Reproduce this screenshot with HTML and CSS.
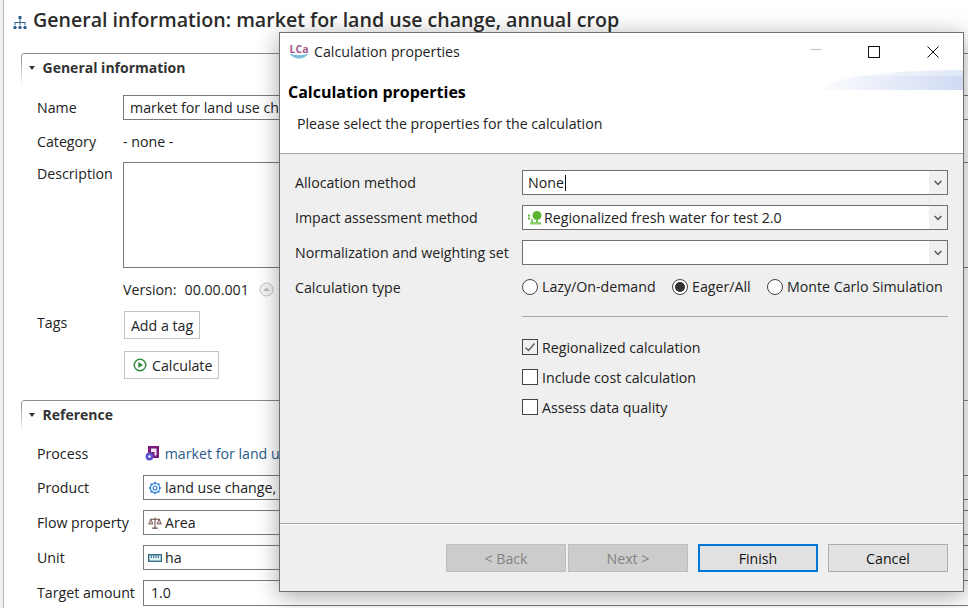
FILE: index.html
```html
<!DOCTYPE html>
<html>
<head>
    <link rel="stylesheet" href="styles.css">
</head>
<body>

<!-- editor behind the dialog -->
<div class="editor">
    <h1 class="editor-title">
        <svg class="title-icon" width="14" height="14" viewBox="0 0 14 14"><g fill="#2f5f8a"><rect x="5.5" y="0" width="3" height="3"/><rect x="6.5" y="3" width="1" height="3"/><rect x="2" y="6" width="10" height="1"/><rect x="1.5" y="6" width="1" height="3"/><rect x="6.5" y="6" width="1" height="3"/><rect x="11.5" y="6" width="1" height="3"/><circle cx="2" cy="11.5" r="1.7"/><circle cx="7" cy="11.5" r="1.7"/><circle cx="12" cy="11.5" r="1.7"/></g></svg>
        General information: market for land use change, annual crop
    </h1>

    <section class="panel panel-general">
        <h2 class="panel-title"><span class="twistie"></span>General information</h2>
        <div class="row row-name">
            <label>Name</label>
            <div class="field field-name">market for land use cha</div>
        </div>
        <div class="row row-category">
            <label>Category</label>
            <div class="plain">- none -</div>
        </div>
        <div class="row row-desc">
            <label>Description</label>
            <div class="field field-desc"></div>
        </div>
        <div class="version">
            <span>Version:</span><span class="version-num">00.00.001</span>
            <svg width="15" height="15" viewBox="0 0 15 15"><circle cx="7.5" cy="7.5" r="6.5" fill="#f4f4f4" stroke="#c4c4c4"/><path d="M4 9 L7.5 5.5 L11 9 Z" fill="#bdbdbd"/></svg>
        </div>
        <div class="row row-tags">
            <label>Tags</label>
            <div class="flat-btn tag-btn">Add a tag</div>
        </div>
        <div class="flat-btn calc-btn">
            <svg width="14" height="14" viewBox="0 0 14 14"><circle cx="7" cy="7" r="5.8" fill="none" stroke="#2e8b3d" stroke-width="1.4"/><path d="M5.3 4 L10 7 L5.3 10 Z" fill="#2e8b3d"/></svg>
            Calculate
        </div>
    </section>

    <section class="panel panel-ref">
        <h2 class="panel-title"><span class="twistie"></span>Reference</h2>
        <div class="ref-row ref-process">
            <label>Process</label>
            <div class="plain link">
                <svg width="14" height="15" viewBox="0 0 14 15"><rect x="3" y="0" width="11" height="12" fill="#7a1a7a"/><path d="M6 2.5 H11.5 V9.5 H9.5 V6 H6 Z" fill="#f4e8f4"/><circle cx="4.5" cy="10.5" r="2.6" fill="#fff" stroke="#5a50c8" stroke-width="2.6"/></svg>
                market for land u
            </div>
        </div>
        <div class="ref-row">
            <label>Product</label>
            <div class="field field-ref">
                <svg width="14" height="14" viewBox="0 0 14 14"><circle cx="7" cy="7" r="2" fill="none" stroke="#2f7fe0" stroke-width="1.1"/><circle cx="7" cy="7" r="4.6" fill="none" stroke="#2f7fe0" stroke-width="1.1"/><path d="M7 0.8 V2.6 M7 11.4 V13.2 M0.8 7 H2.6 M11.4 7 H13.2 M2.6 2.6 L3.8 3.8 M10.2 10.2 L11.4 11.4 M11.4 2.6 L10.2 3.8 M3.8 10.2 L2.6 11.4" stroke="#2f7fe0" stroke-width="1.5"/></svg>
                land use change,
            </div>
        </div>
        <div class="ref-row">
            <label>Flow property</label>
            <div class="field field-ref">
                <svg width="14" height="14" viewBox="0 0 15 14"><path d="M7.5 1 V12 M4.5 12.5 H10.5 M2 3 H13" stroke="#6a4a42" stroke-width="1.1" fill="none"/><path d="M3 3 L0.7 8 H5.3 Z M12 3 L9.7 8 H14.3 Z" fill="#e0ccc6" stroke="#6a4a42" stroke-width="0.9"/></svg>
                Area
            </div>
        </div>
        <div class="ref-row">
            <label>Unit</label>
            <div class="field field-ref">
                <svg width="14" height="14" viewBox="0 0 15 14"><rect x="0.7" y="3.5" width="13.6" height="7" fill="#dff0f2" stroke="#1f5f78" stroke-width="1.3"/><path d="M3.5 4 V7 M6 4 V7 M8.5 4 V7 M11 4 V7" stroke="#1f5f78"/></svg>
                ha
            </div>
        </div>
        <div class="ref-row">
            <label>Target amount</label>
            <div class="field field-ref field-amount">1.0</div>
        </div>
    </section>
</div>

<!-- the wizard dialog -->
<div class="dialog">
    <div class="titlebar">
        <span class="lca-logo">
            <span class="lca-text">LCa</span>
            <svg width="20" height="6" viewBox="0 0 20 6"><path d="M0.5 0.5 Q10 4 19.5 0.5 Q16 5.5 10 5.5 Q4 5.5 0.5 0.5 Z" fill="#7cc0e0"/></svg>
        </span>
        <span class="titlebar-text">Calculation properties</span>
        <div class="win-btns">
            <span class="win-min"></span>
            <span class="win-max"></span>
            <svg width="12" height="12" viewBox="0 0 12 12"><path d="M0.5 0.5 L11.5 11.5 M11.5 0.5 L0.5 11.5" stroke="#111" stroke-width="1"/></svg>
        </div>
    </div>
    <div class="banner">
        <div class="swoosh"></div>
        <div class="banner-title">Calculation properties</div>
        <div class="banner-sub">Please select the properties for the calculation</div>
    </div>
    <div class="body">
        <div class="form-grid">
            <label>Allocation method</label>
            <div class="combo"><span class="combo-text">None<i class="caret"></i></span><span class="combo-arrow"><svg width="8" height="6" viewBox="0 0 8 6"><path d="M0.7 1 L4 4.5 L7.3 1" fill="none" stroke="#555" stroke-width="1.5"/></svg></span></div>
            <label>Impact assessment method</label>
            <div class="combo"><span class="combo-text combo-icon">
                <svg width="14" height="14" viewBox="0 0 14 14"><circle cx="9" cy="4.5" r="4.5" fill="#5cb531"/><rect x="8" y="8" width="2" height="3" fill="#7ac05a"/><path d="M2 11 H13 V13.5 H2 Z M3 8 H5 V12 H3 Z" fill="#8ccf70"/><rect x="0" y="3.5" width="2" height="2" fill="#5cb531"/><rect x="0" y="6.5" width="2" height="2" fill="#5cb531"/></svg>
                Regionalized fresh water for test 2.0</span><span class="combo-arrow"><svg width="8" height="6" viewBox="0 0 8 6"><path d="M0.7 1 L4 4.5 L7.3 1" fill="none" stroke="#555" stroke-width="1.5"/></svg></span></div>
            <label>Normalization and weighting set</label>
            <div class="combo"><span class="combo-text"></span><span class="combo-arrow"><svg width="8" height="6" viewBox="0 0 8 6"><path d="M0.7 1 L4 4.5 L7.3 1" fill="none" stroke="#555" stroke-width="1.5"/></svg></span></div>
            <label>Calculation type</label>
            <div class="radios">
                <span class="radio-item"><span class="radio"></span>Lazy/On-demand</span>
                <span class="radio-item"><span class="radio radio-on"></span>Eager/All</span>
                <span class="radio-item"><span class="radio"></span>Monte Carlo Simulation</span>
            </div>
        </div>
        <div class="form-sep"></div>
        <div class="checks">
            <div class="check-item"><span class="check check-on"><svg width="14" height="14" viewBox="0 0 14 14"><path d="M2.5 7.5 L5.5 10.5 L11.5 3.5" fill="none" stroke="#555" stroke-width="1.2"/></svg></span>Regionalized calculation</div>
            <div class="check-item"><span class="check"></span>Include cost calculation</div>
            <div class="check-item"><span class="check"></span>Assess data quality</div>
        </div>
    </div>
    <div class="footer">
        <div class="btn-pair">
            <div class="btn btn-off">&lt; Back</div>
            <div class="btn btn-off">Next &gt;</div>
        </div>
        <div class="btn btn-default">Finish</div>
        <div class="btn">Cancel</div>
    </div>
</div>

</body>
</html>
```

FILE: styles.css
```css
html, body {
    margin: 0;
    padding: 0;
}
body {
    width: 968px;
    height: 608px;
    overflow: hidden;
    background: #f0f0f0;
    position: relative;
    font-family: "Open Sans", "Noto Sans", sans-serif;
    font-size: 14.2px;
    color: #222;
}
label {
    display: block;
}

/* editor */
.editor {
    height: 608px;
    margin-left: 3px;
    border-left: 1px solid #b5b5b5;
    padding: 7px 0 0 9px;
    box-sizing: border-box;
    background: #fff;
    overflow: hidden;
}
.editor-title {
    display: flex;
    align-items: center;
    gap: 6px;
    margin: 0;
    height: 24px;
    font-size: 19.6px;
    font-weight: 600;
    color: #2b2b2b;
    white-space: nowrap;
}
.title-icon {
    margin-top: 7px;
}
.panel {
    margin-left: 8px;
    border-top: 1px solid #8a8a8a;
    border-top-left-radius: 4px;
    width: 960px;
    box-sizing: border-box;
    background: linear-gradient(#8a8a8a, #fff) left top / 1px 32px no-repeat;
}
.panel-general {
    margin-top: 22px;
    height: 347px;
}
.panel-ref {
    height: 220px;
}
.panel-title {
    display: flex;
    align-items: center;
    margin: 0;
    padding-left: 8px;
    height: 27px;
    font-size: 14px;
    font-weight: 700;
    color: #333;
}
.twistie {
    width: 0;
    height: 0;
    border: 3.5px solid transparent;
    border-top: 4px solid #333;
    border-bottom: 0;
    margin-right: 7.5px;
}
.row {
    display: flex;
    padding-left: 16px;
}
.row label {
    width: 86px;
    flex: none;
}
.row-name {
    margin-top: 14px;
    align-items: center;
}
.row-name label {
    margin-top: -1px;
}
.field {
    border: 1px solid #7a7a7a;
    background: #fff;
    box-sizing: border-box;
    white-space: nowrap;
}
.field-name {
    width: 900px;
    height: 25px;
    line-height: 23px;
    padding-left: 6px;
}
.row-category {
    margin-top: 12px;
    align-items: center;
}
.plain {
    white-space: nowrap;
}
.row-desc {
    margin-top: 11px;
}
.row-desc label {
    margin-top: 2px;
}
.field-desc {
    width: 900px;
    height: 106px;
}
.version {
    display: flex;
    align-items: center;
    margin: 12px 0 0 102px;
    height: 18px;
}
.version-num {
    margin: 0 10px 0 8px;
}
.row-tags {
    margin-top: 13px;
}
.row-tags label {
    margin-top: 2px;
    width: 87px;
}
.flat-btn {
    display: inline-flex;
    align-items: center;
    height: 28px;
    border: 1px solid #c4c4c4;
    box-sizing: border-box;
    padding: 0 4px;
    white-space: nowrap;
    background: #fff;
}
.tag-btn {
    width: 76px;
    justify-content: center;
}
.calc-btn {
    margin: 12px 0 0 103px;
    width: 95px;
    gap: 5px;
    padding: 0 0 0 8px;
}

.ref-row {
    display: flex;
    align-items: center;
    padding-left: 16px;
    height: 35px;
}
.ref-row label {
    width: 106px;
    flex: none;
}
.ref-process {
    margin-top: 8px;
    height: 34px;
}
.ref-process svg {
    margin: 0 2px 0 2px;
    vertical-align: -2px;
}
.link {
    color: #2a5a8a;
}
.field-ref {
    display: flex;
    align-items: center;
    gap: 3px;
    width: 900px;
    height: 25px;
    padding-left: 4px;
}
.field-amount {
    padding-left: 7px;
    height: 26px;
}

/* dialog */
.dialog {
    position: absolute;
    left: 279px;
    top: 32px;
    width: 685px;
    height: 560px;
    box-sizing: border-box;
    border: 1px solid #707070;
    background: #efefef;
    box-shadow: 0 4px 22px rgba(0, 0, 0, 0.35);
    display: flex;
    flex-direction: column;
}
.titlebar {
    display: flex;
    align-items: center;
    height: 37px;
    background: #fff;
    padding-left: 9px;
    flex: none;
}
.lca-logo {
    display: flex;
    flex-direction: column;
    align-items: center;
    width: 20px;
    margin-top: -2px;
}
.lca-logo svg {
    margin-top: -2px;
}
.lca-text {
    font-size: 10.5px;
    font-weight: 700;
    color: #a4588e;
    line-height: 12px;
}
.titlebar-text {
    margin-left: 5px;
    color: #222;
}
.win-btns {
    margin-left: auto;
    display: flex;
    align-items: center;
    margin-right: 24px;
}
.win-min {
    width: 12px;
    height: 1px;
    background: #c4c4c4;
    margin: -4px 46px 0 0;
}
.win-max {
    width: 10px;
    height: 10px;
    border: 1px solid #111;
    margin-right: 47px;
}
.banner {
    height: 83px;
    flex: none;
    background: #fff;
    border-bottom: 1px solid #a8a8a8;
    position: relative;
}
.swoosh {
    position: absolute;
    right: 0;
    top: 0;
    width: 141px;
    height: 20px;
    background: linear-gradient(rgba(255, 255, 255, 0.35) 6px, transparent 6px), linear-gradient(90deg, #fbfcfe, #cfdaf2);
    border-radius: 100% 0 0 0 / 100% 0 0 0;
}
.banner-title {
    padding: 11px 0 0 8px;
    font-size: 16px;
    font-weight: 700;
    color: #000;
    line-height: 22px;
}
.banner-sub {
    padding: 11px 0 0 17px;
    line-height: 20px;
}
.body {
    flex: 1;
    padding: 16px 15px 0 15px;
    border-bottom: 1px solid #a8a8a8;
}
.form-grid {
    display: grid;
    grid-template-columns: 227px 426px;
    grid-auto-rows: 25px;
    row-gap: 10px;
    align-items: center;
}
.form-grid label {
    white-space: nowrap;
}
.combo {
    display: flex;
    height: 25px;
    border: 1px solid #707070;
    background: #fff;
    box-sizing: border-box;
}
.combo-text {
    flex: 1;
    padding-left: 5px;
    line-height: 23px;
    display: flex;
    align-items: center;
    gap: 2px;
    color: #222;
}
.caret {
    display: inline-block;
    width: 1px;
    height: 16px;
    background: #111;
    margin-left: -1px;
}
.combo-arrow {
    width: 18px;
    background: #f0f0f0;
    display: flex;
    align-items: center;
    justify-content: center;
}
.radios {
    display: grid;
    grid-template-columns: 150px 95px auto;
    white-space: nowrap;
    margin-top: -2px;
}
.radio-item {
    display: flex;
    align-items: center;
    gap: 4px;
}
.radio {
    width: 14px;
    height: 14px;
    border: 1px solid #444;
    border-radius: 50%;
    background: #fff;
    position: relative;
}
.radio-on::after {
    content: "";
    position: absolute;
    left: 2px;
    top: 2px;
    width: 10px;
    height: 10px;
    border-radius: 50%;
    background: #333;
}
.form-sep {
    margin: 16px 0 0 227px;
    width: 426px;
    height: 1px;
    background: #a8a8a8;
}
.checks {
    margin: 20px 0 0 227px;
}
.check-item {
    display: flex;
    align-items: center;
    gap: 4px;
    height: 20px;
    margin-bottom: 10px;
}
.check {
    width: 14px;
    height: 14px;
    border: 1px solid #444;
    background: #fff;
    display: flex;
}
.check-on {
    background: #f0f0f0;
}
.footer {
    flex: none;
    height: 67px;
    border-top: 1px solid #fff;
    box-sizing: border-box;
    display: flex;
    padding: 19px 0 0 166px;
}
.btn-pair {
    display: flex;
    gap: 2px;
    margin-right: 10px;
}
.btn {
    width: 120px;
    flex: none;
    height: 28px;
    box-sizing: border-box;
    border: 1px solid #adadad;
    background: #e1e1e1;
    color: #111;
    display: flex;
    align-items: center;
    justify-content: center;
}
.btn-off {
    background: #ccc;
    border-color: #bfbfbf;
    color: #838383;
}
.btn-default {
    border: 2px solid #0078d7;
    margin-right: 10px;
}
```
